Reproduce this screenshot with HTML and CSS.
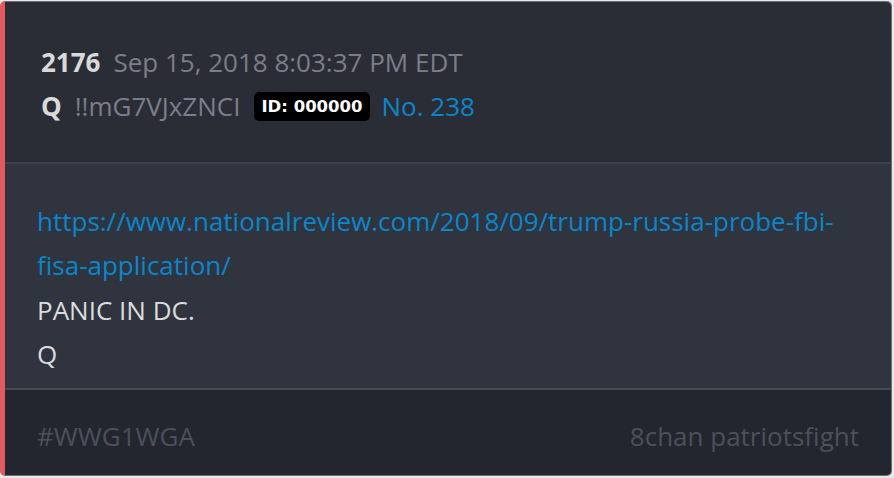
FILE: index.html
```html
<!DOCTYPE html>
<html lang="en">
<head>
  <meta charset="UTF-8">
  <title>Q Post 2176</title>
  <link rel="stylesheet" href="styles.css">
</head>
<body>
  <div class="post">
    <div class="post-header">
      <div class="meta-row">
        <span class="post-num">2176</span>
        <span class="post-date">Sep 15, 2018 8:03:37 PM EDT</span>
      </div>
      <div class="meta-row">
        <span class="author">Q</span>
        <span class="trip">!!mG7VJxZNCI</span>
        <span class="id-badge">ID: 000000</span>
        <a class="post-link" href="#">No. 238</a>
      </div>
    </div>

    <div class="post-body">
      <a class="body-link" href="#">https://www.nationalreview.com/2018/09/trump-russia-probe-fbi-fisa-application/</a>
      <div>PANIC IN DC.</div>
      <div>Q</div>
    </div>

    <div class="post-footer">
      <span>#WWG1WGA</span>
      <span>8chan patriotsfight</span>
    </div>
  </div>
</body>
</html>
```

FILE: styles.css
```css
html, body {
  margin: 0;
  padding: 0;
  background: #e9e9ea;
}
body {
  font-family: 'Open Sans', 'Noto Sans', sans-serif;
  font-size: 26px;
  line-height: 44.3px;
}
.post {
  margin: 1px 2px 2px 0;
  height: 475px;
  box-sizing: border-box;
  border: 1px solid #6b6e77;
  border-left: 5px solid #e25a5f;
  border-radius: 5px;
  overflow: hidden;
  display: flex;
  flex-direction: column;
}
.post-header {
  background: #2a2d36;
  padding: 38px 32px 0 36px;
  height: 162px;
  box-sizing: border-box;
  border-bottom: 2px solid #3d414b;
}
.meta-row {
  display: flex;
  align-items: center;
  height: 44px;
}
.post-num, .author {
  font-weight: 700;
  color: #d9d9d9;
  margin-right: 13px;
}
.post-date, .trip {
  color: #7b7e8a;
}
.trip { margin-right: 14px; }
.id-badge {
  background: #000;
  color: #fff;
  font-family: 'DejaVu Sans', sans-serif;
  font-weight: 700;
  font-size: 16.5px;
  line-height: 29px;
  padding: 0 7px;
  border-radius: 5px;
  margin-right: 12px;
}
.post-link, .body-link {
  color: #0a86cc;
  text-decoration: none;
}
.post-body {
  background: #2f343e;
  color: #dcdcdc;
  padding: 35px 32px 0;
  height: 226px;
  box-sizing: border-box;
  border-bottom: 2px solid #454953;
}
.body-link { display: block; }
.post-footer {
  flex: 1;
  background: #23262e;
  color: #4c505b;
  display: flex;
  justify-content: space-between;
  padding: 24px 32px 0;
}
```
